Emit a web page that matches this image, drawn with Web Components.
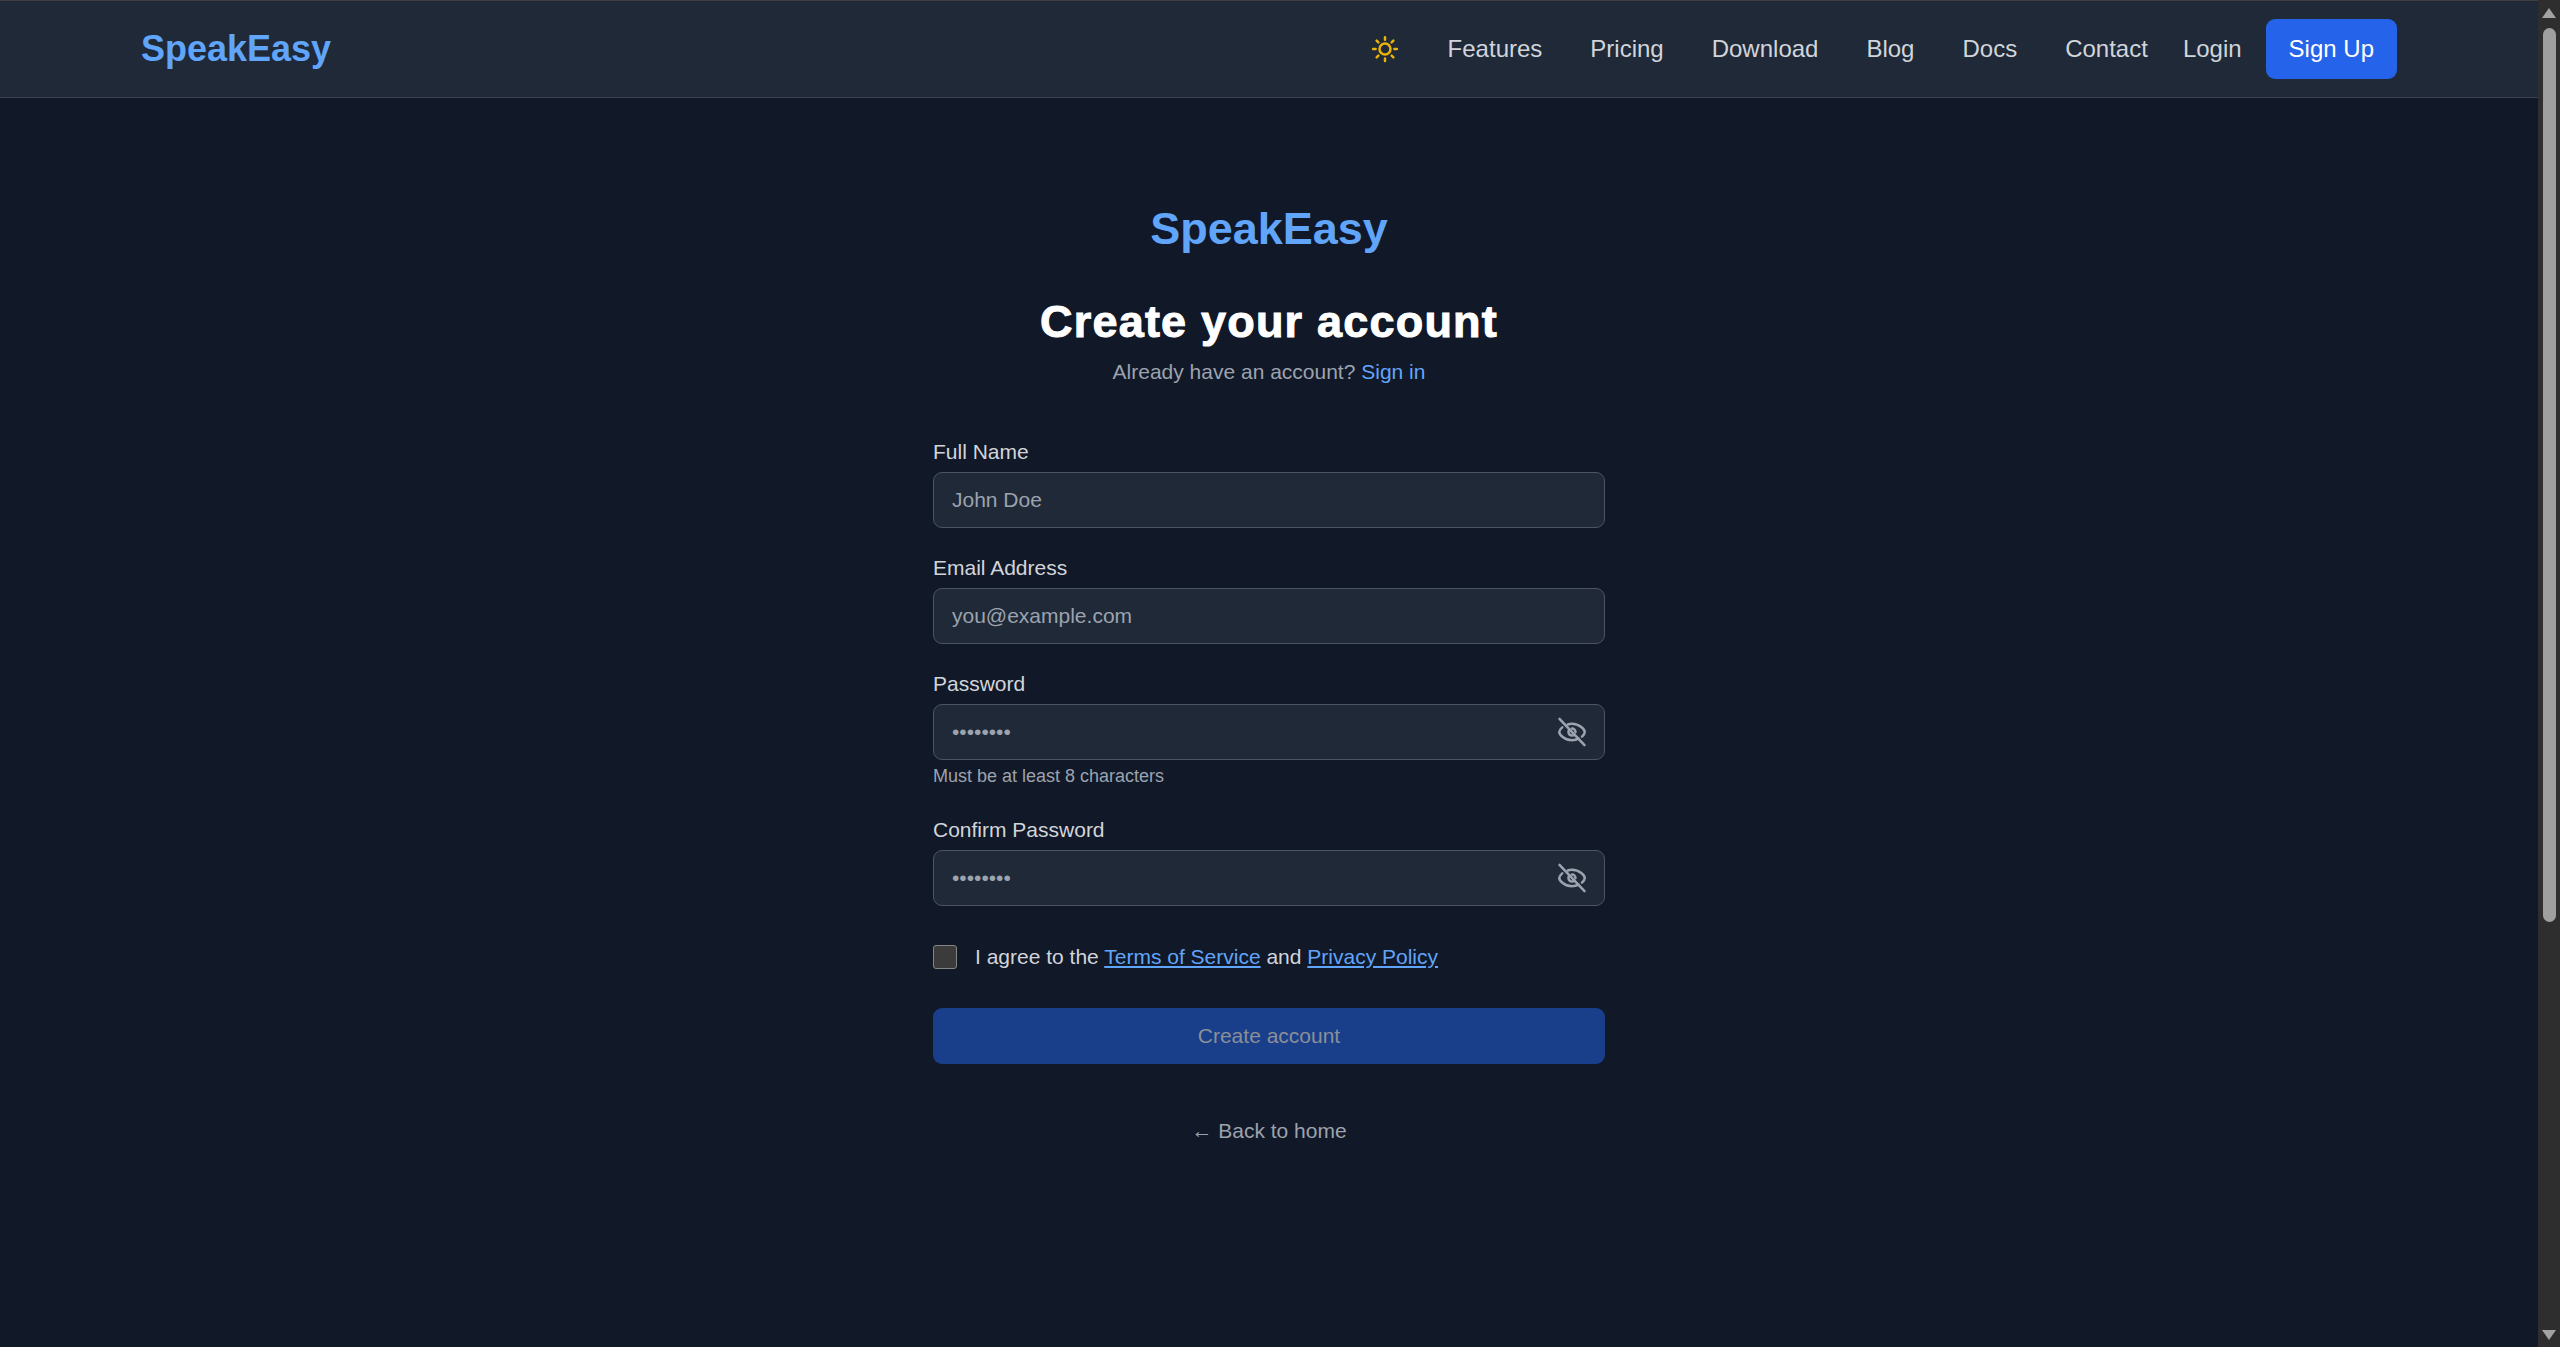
<!DOCTYPE html>
<html>
<head>
<meta charset="utf-8">
<title>SpeakEasy</title>
<style>
    html, body { margin: 0; height: 100%; overflow: hidden; background: #111827; }
    body { display: flex; font-family: "Liberation Sans", Arial, sans-serif; }
    site-page { flex: 1; min-width: 0; }
</style>
</head>
<body>
<site-page>
    <site-header></site-header>
    <signup-form></signup-form>
</site-page>
<fake-scrollbar></fake-scrollbar>

<template id="header-template">
    <style>
        :host {
            display: flex;
            align-items: center;
            justify-content: space-between;
            height: 96px;
            padding: 0 141px 0 141px;
            background: #1f2937;
            border-top: 1px solid #3f3f3f;
            border-bottom: 1px solid #374151;
        }
        .logo { font-size: 36px; font-weight: 700; color: #60a5fa; text-decoration: none; }
        nav { display: flex; align-items: center; font-size: 24px; }
        a { color: #d1d5db; text-decoration: none; }
        .links { display: flex; align-items: center; gap: 48px; }
        .sun { display: block; width: 30px; height: 30px; }
        .login { margin-left: 35px; }
        .signup {
            margin-left: 24px;
            padding: 0 23px;
            height: 60px;
            line-height: 60px;
            border-radius: 9px;
            background: #2563eb;
            color: #fff;
        }
    </style>
    <a class="logo" href="#">SpeakEasy</a>
    <nav>
        <div class="links">
            <svg class="sun" viewBox="0 0 24 24" fill="none" stroke="#eab308" stroke-width="2" stroke-linecap="round">
                <circle cx="12" cy="12" r="4.4"></circle>
                <path d="M12 2.5v2M12 19.5v2M2.5 12h2M19.5 12h2M5.3 5.3l1.4 1.4M17.3 17.3l1.4 1.4M5.3 18.7l1.4-1.4M17.3 6.7l1.4-1.4"></path>
            </svg>
            <a href="#">Features</a>
            <a href="#">Pricing</a>
            <a href="#">Download</a>
            <a href="#">Blog</a>
            <a href="#">Docs</a>
            <a href="#">Contact</a>
        </div>
        <a class="login" href="#">Login</a>
        <a class="signup" href="#">Sign Up</a>
    </nav>
</template>

<template id="field-template">
    <style>
        :host { display: block; margin-bottom: 24px; }
        label { display: block; font-size: 21px; line-height: 31.5px; margin-bottom: 4.5px; color: #d1d5db; }
        .box { position: relative; }
        input {
            display: block;
            box-sizing: border-box;
            width: 100%;
            height: 56px;
            padding: 0 18px;
            border: 1.5px solid #4b5563;
            border-radius: 9px;
            background: #1f2937;
            color: #fff;
            font: 21px "Liberation Sans", Arial, sans-serif;
            outline: none;
        }
        input::placeholder { color: #9ca3af; opacity: 1; }
        svg { display: none; position: absolute; right: 18px; top: 13px; width: 30px; height: 30px; }
        :host([eye]) svg { display: block; }
        .hint { display: none; margin-top: 3px; font-size: 18px; line-height: 27px; color: #9ca3af; }
        :host([hint]) .hint { display: block; }
    </style>
    <label></label>
    <div class="box">
        <input>
        <svg viewBox="0 0 24 24" fill="none" stroke="#9ca3af" stroke-width="2" stroke-linecap="round" stroke-linejoin="round">
            <path d="M4.2 8.3C2.6 9.6 1.8 11 1.8 12c0 1.8 4 6.6 10.2 6.6 2 0 3.8-.5 5.3-1.3M8.6 6c1-.4 2.200-.600 3.400-.600 6.200 0 10.200 4.800 10.200 6.600 0 1-.8 2.400-2.200 3.700"></path>
            <path d="M12 9.200a2.800 2.800 0 0 1 2.800 2.800M14 14a2.800 2.800 0 0 1-4-4"></path>
            <path d="M2 1.500l20 21"></path>
        </svg>
    </div>
    <div class="hint"></div>
</template>

<template id="form-template">
    <style>
        :host { display: block; width: 672px; margin: 0 auto; padding-top: 101px; text-align: center; }
        a { color: #60a5fa; text-decoration: none; }
        .logo { font-size: 45px; line-height: 60px; font-weight: 700; color: #60a5fa; }
        h1 {
            margin: 33px 0 2px;
            font-size: 45px;
            line-height: 60px;
            font-weight: 900;
            color: #fff;
            letter-spacing: 1.2px;
            -webkit-text-stroke: 1px #fff;
        }
        .sub { margin: 0 0 46px; font-size: 21px; line-height: 36px; color: #9ca3af; }
        form { text-align: left; }
        .agree { display: flex; align-items: center; gap: 18px; margin: 39px 0; font-size: 21px; line-height: 24px; color: #d1d5db; }
        .agree a { text-decoration: underline; }
        .agree input {
            appearance: none;
            box-sizing: border-box;
            flex: none;
            width: 24px;
            height: 24px;
            margin: 0;
            border: 1.5px solid #858585;
            border-radius: 3px;
            background: #3b3b3b;
        }
        button {
            display: block;
            width: 100%;
            height: 56px;
            border: 0;
            border-radius: 9px;
            background: #1a3f8a;
            color: #8b8f97;
            font: 21px "Liberation Sans", Arial, sans-serif;
        }
        .back { display: block; margin-top: 50px; font-size: 21px; line-height: 34px; color: #9ca3af; }
    </style>
    <div class="logo">SpeakEasy</div>
    <h1>Create your account</h1>
    <p class="sub">Already have an account? <a href="#">Sign in</a></p>
    <form>
        <form-field label="Full Name" placeholder="John Doe"></form-field>
        <form-field label="Email Address" placeholder="you@example.com" type="email"></form-field>
        <form-field label="Password" placeholder="••••••••" type="password" eye hint="Must be at least 8 characters"></form-field>
        <form-field label="Confirm Password" placeholder="••••••••" type="password" eye></form-field>
        <div class="agree">
            <input type="checkbox">
            <span>I agree to the <a href="#">Terms of Service</a> and <a href="#">Privacy Policy</a></span>
        </div>
        <button type="button" disabled>Create account</button>
    </form>
    <a class="back" href="#">← Back to home</a>
</template>

<template id="scrollbar-template">
    <style>
        :host {
            flex: none;
            display: flex;
            flex-direction: column;
            align-items: center;
            width: 22px;
            height: 100%;
            background: #2e2e2e;
        }
        .up, .down { flex: none; width: 0; height: 0; border-left: 7px solid transparent; border-right: 7px solid transparent; }
        .up { margin-top: 8px; border-bottom: 10px solid #a3a3a3; }
        .thumb { flex: none; width: 13px; height: 894px; margin-top: 10px; border-radius: 7px; background: #9f9f9f; }
        .down { margin-top: auto; margin-bottom: 7px; border-top: 10px solid #a3a3a3; }
    </style>
    <div class="up"></div>
    <div class="thumb"></div>
    <div class="down"></div>
</template>

<script type="text/javascript">
function stamp(el, id){
    el.attachShadow({mode: 'open'});
    el.shadowRoot.appendChild(document.getElementById(id).content.cloneNode(true));
}

class SitePage extends HTMLElement{
    constructor(){
        super();
        this.attachShadow({mode: 'open'}).innerHTML = `<style>:host{display:block;}</style><slot></slot>`;
    }
}

class SiteHeader extends HTMLElement{
    constructor(){
        super();
        stamp(this, 'header-template');
    }
}

class FormField extends HTMLElement{
    constructor(){
        super();
        stamp(this, 'field-template');
    }

    connectedCallback(){
        const root = this.shadowRoot;
        root.querySelector('label').textContent = this.getAttribute('label');
        const input = root.querySelector('input');
        input.type = this.getAttribute('type') || 'text';
        input.placeholder = this.getAttribute('placeholder') || '';
        root.querySelector('.hint').textContent = this.getAttribute('hint') || '';
    }
}

class SignupForm extends HTMLElement{
    constructor(){
        super();
        stamp(this, 'form-template');
    }
}

class FakeScrollbar extends HTMLElement{
    constructor(){
        super();
        stamp(this, 'scrollbar-template');
    }
}

window.customElements.define("site-page", SitePage);
window.customElements.define("site-header", SiteHeader);
window.customElements.define("form-field", FormField);
window.customElements.define("signup-form", SignupForm);
window.customElements.define("fake-scrollbar", FakeScrollbar);
</script>
</body>
</html>
